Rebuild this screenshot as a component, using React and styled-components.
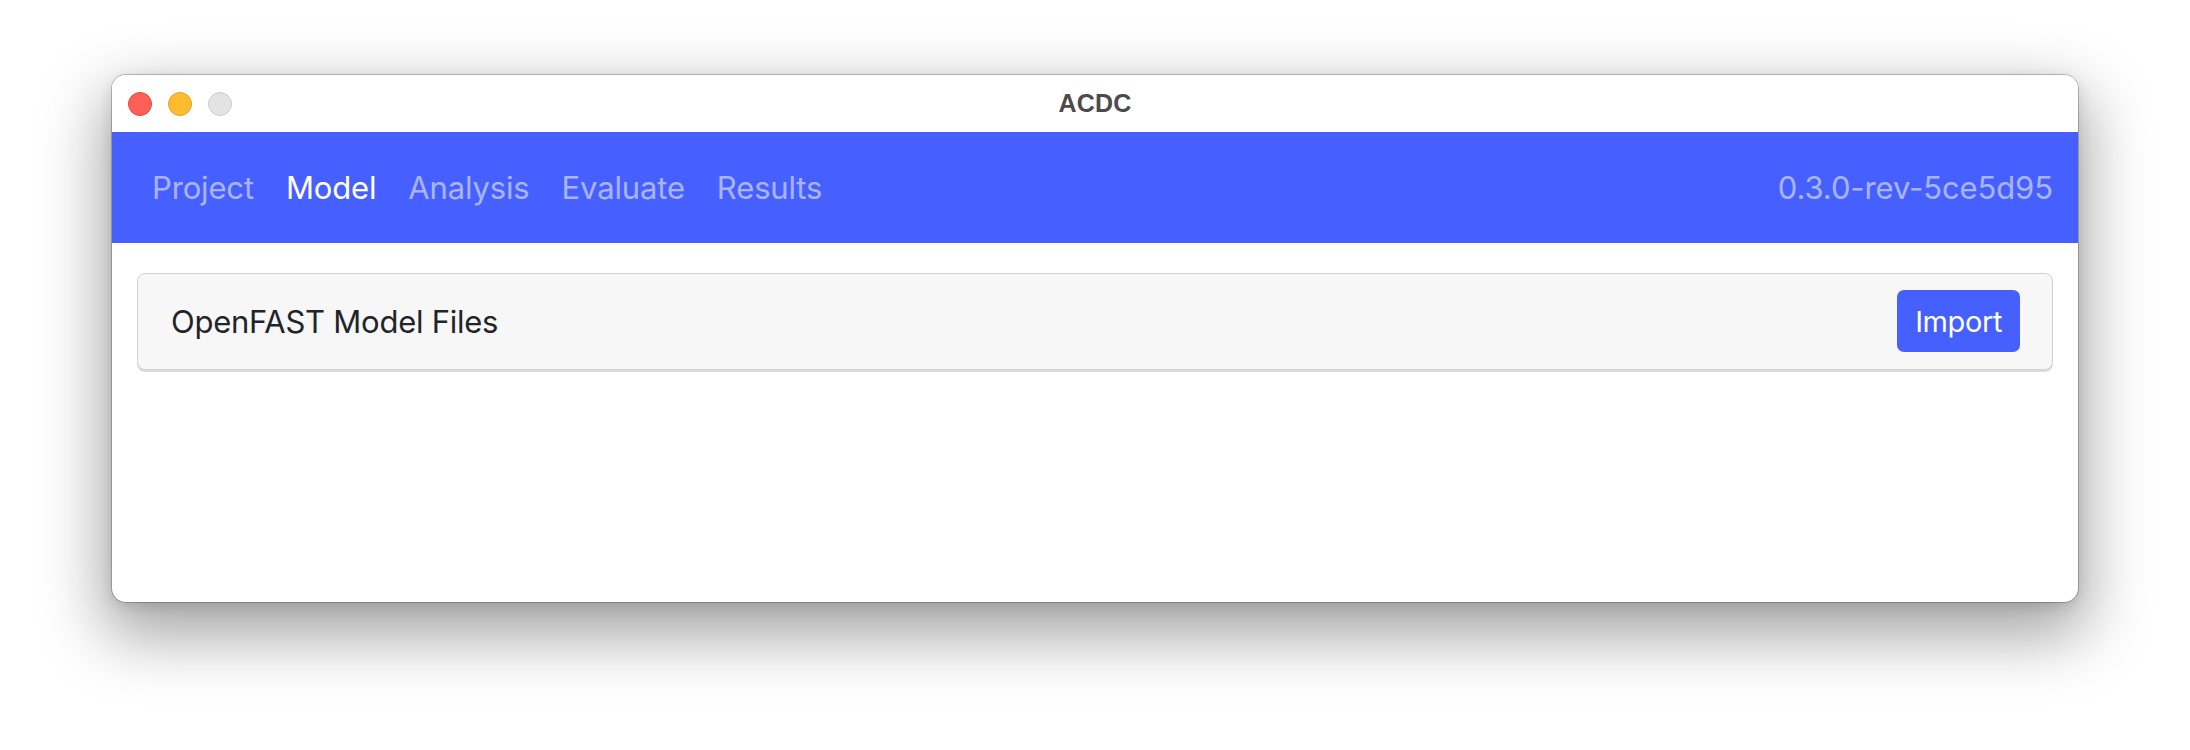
import styled, { createGlobalStyle } from "styled-components";

const BLUE = "#465fff";
const FONT = `Inter, "Noto Sans", "Liberation Sans", sans-serif`;

const GlobalStyle = createGlobalStyle`
  html, body {
    margin: 0;
    padding: 0;
    background: #ffffff;
  }
  body {
    font-family: ${FONT};
  }
`;

const navItems = ["Project", "Model", "Analysis", "Evaluate", "Results"];
const ACTIVE = "Model";

export default function App() {
  return (
    <>
      <GlobalStyle />
      <Stage>
        <Window>
          <TitleBar>
            <Lights>
              <Light $fill="#ff5f57" $edge="#e1473f" />
              <Light $fill="#febc2e" $edge="#dea223" />
              <Light $fill="#e3e3e3" $edge="#cdcdcd" />
            </Lights>
            <Title>ACDC</Title>
            <span />
          </TitleBar>
          <Header>
            <Nav>
              {navItems.map((item) => (
                <NavLink key={item} $active={item === ACTIVE}>
                  {item}
                </NavLink>
              ))}
            </Nav>
            <Version>0.3.0-rev-5ce5d95</Version>
          </Header>
          <Content>
            <Card>
              <CardTitle>OpenFAST Model Files</CardTitle>
              <ImportButton>Import</ImportButton>
            </Card>
          </Content>
        </Window>
      </Stage>
    </>
  );
}

const Stage = styled.div`
  width: 2190px;
  height: 750px;
  box-sizing: border-box;
  padding: 75px 0 0 112px;
  overflow: hidden;
`;

const Window = styled.div`
  width: 1966px;
  height: 527px;
  background: #ffffff;
  border-radius: 14px;
  overflow: hidden;
  box-shadow: 0 0 0 1px rgba(0, 0, 0, 0.22), 0 26px 64px 8px rgba(0, 0, 0, 0.36),
    0 4px 14px rgba(0, 0, 0, 0.12);
  display: flex;
  flex-direction: column;
`;

const TitleBar = styled.div`
  height: 57px;
  flex: none;
  display: grid;
  grid-template-columns: 1fr auto 1fr;
  align-items: center;
  background: #ffffff;
`;

const Lights = styled.div`
  display: flex;
  gap: 16px;
  padding-left: 16px;
`;

const Light = styled.span`
  width: 22px;
  height: 22px;
  border-radius: 50%;
  background: ${(p) => p.$fill};
  border: 1px solid ${(p) => p.$edge};
`;

const Title = styled.div`
  font-family: "Liberation Sans", Arial, sans-serif;
  font-weight: 700;
  font-size: 25px;
  color: #4b4b4b;
  letter-spacing: 0.2px;
`;

const Header = styled.header`
  height: 111px;
  flex: none;
  background: ${BLUE};
  display: flex;
  align-items: center;
  justify-content: space-between;
  padding: 0 25px 0 24px;
`;

const Nav = styled.nav`
  display: flex;
  align-items: center;
`;

const NavLink = styled.a`
  padding: 0 16px;
  font-size: 31px;
  line-height: 1;
  letter-spacing: -0.15px;
  color: ${(p) => (p.$active ? "#ffffff" : "rgba(255, 255, 255, 0.55)")};
  cursor: pointer;
`;

const Version = styled.div`
  font-size: 31px;
  line-height: 1;
  letter-spacing: -0.1px;
  color: rgba(255, 255, 255, 0.55);
`;

const Content = styled.main`
  flex: 1;
  padding: 30px 25px;
`;

const Card = styled.section`
  display: flex;
  align-items: center;
  justify-content: space-between;
  padding: 16px 32px 17px 33px;
  background: #f7f7f7;
  border: 1px solid #d2d2d2;
  border-radius: 8px;
  box-shadow: 0 2px 0 rgba(0, 0, 0, 0.14);
`;

const CardTitle = styled.h2`
  margin: 0;
  font-size: 31px;
  font-weight: 400;
  letter-spacing: -0.25px;
  color: #212529;
`;

const ImportButton = styled.button`
  height: 62px;
  padding: 0 18px;
  border: none;
  border-radius: 7px;
  background: ${BLUE};
  color: #ffffff;
  font-family: ${FONT};
  font-size: 29px;
  letter-spacing: -0.4px;
  cursor: pointer;
`;
